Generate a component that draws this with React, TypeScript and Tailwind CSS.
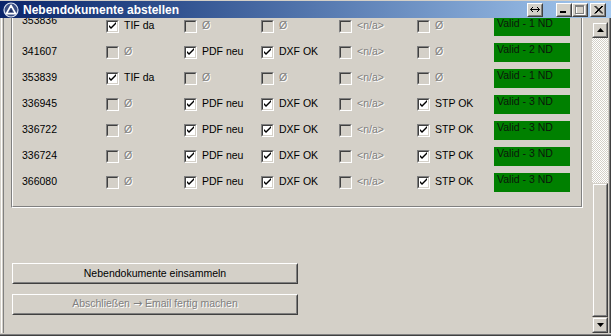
import React from "react"

type Cell = { label: string; on: boolean }

const TIF: Cell = { label: "TIF da", on: true }
const PDF: Cell = { label: "PDF neu", on: true }
const DXF: Cell = { label: "DXF OK", on: true }
const STP: Cell = { label: "STP OK", on: true }
const NA: Cell = { label: "<n/a>", on: false }
const NONE: Cell = { label: "Ø", on: false }

const rows: { id: string; cells: Cell[]; nd: number }[] = [
  { id: "353836", cells: [TIF, NONE, NONE, NA, NONE], nd: 1 },
  { id: "341607", cells: [NONE, PDF, DXF, NA, NONE], nd: 2 },
  { id: "353839", cells: [TIF, NONE, NONE, NA, NONE], nd: 1 },
  { id: "336945", cells: [NONE, PDF, DXF, NA, STP], nd: 3 },
  { id: "336722", cells: [NONE, PDF, DXF, NA, STP], nd: 3 },
  { id: "336724", cells: [NONE, PDF, DXF, NA, STP], nd: 3 },
  { id: "366080", cells: [NONE, PDF, DXF, NA, STP], nd: 3 },
]

export default function App() {
  return (
    <div className="w-[611px] h-[336px] bg-[#d4d0c8] flex flex-col overflow-hidden font-['Liberation_Sans',Arial,sans-serif] text-[10.5px] text-black border-t border-t-[#d4d0c8]">
      <TitleBar />

      <div className="flex flex-1 min-h-0">
        {/* left frame */}
        <div className="w-[3px] pl-[1px]">
          <div className="w-[1px] h-full bg-white" />
        </div>

        {/* scrolled client area */}
        <div className="flex-1 overflow-hidden border-l border-l-[#808080]">
          <div className="-mt-[5px] ml-[7px] w-[572px] border-x border-b border-l-[#808080] border-r-white border-b-white">
            <div className="border-x border-b border-l-white border-r-[#808080] border-b-[#808080] pl-[9px] pb-[11px]">
              {rows.map((r, n) => (
                <div key={r.id} className="grid grid-cols-[84px_78px_77px_78px_78px_77px_76px] h-[26px] items-center">
                  <span className={n === 0 ? "mb-[10px]" : ""}>{r.id}</span>
                  {r.cells.map((c, i) => (
                    <CheckCell key={i} cell={c} />
                  ))}
                  <div className="h-[19px] bg-[#008000] pl-[3px] leading-[13px] text-[#0b160b]">
                    Valid - {r.nd} ND
                  </div>
                </div>
              ))}
            </div>
          </div>

          <div className="mt-[55px] ml-[8px] w-[286px] flex flex-col gap-[10px]">
            <PushButton>Nebendokumente einsammeln</PushButton>
            <PushButton disabled>
              Abschließen <span className="font-['DejaVu_Sans',sans-serif] text-[11px]">→</span> Email fertig machen
            </PushButton>
          </div>
        </div>

        <ScrollBar />

        {/* right frame */}
        <div className="w-[3px] flex">
          <div className="w-[1px] bg-[#d4d0c8]" />
          <div className="w-[1px] bg-[#808080]" />
          <div className="w-[1px] bg-[#404040]" />
        </div>
      </div>

      {/* bottom frame */}
      <div className="h-[3px] flex flex-col">
        <div className="h-[1px] bg-[#d4d0c8]" />
        <div className="h-[1px] bg-[#808080]" />
        <div className="h-[1px] bg-[#404040]" />
      </div>
    </div>
  )
}

function TitleBar() {
  return (
    <div className="h-[17px] flex items-center bg-linear-to-r from-[#0a246a] to-[#a6caf0] pl-[3px] pr-[5px]">
      <svg width="16" height="16" viewBox="0 0 16 16" className="shrink-0">
        <circle cx="8" cy="8" r="7" fill="#3b4f84" stroke="#dde4f2" strokeWidth="1.2" />
        <path d="M8 3.3 L12.6 11.6 L3.4 11.6 Z" fill="none" stroke="#ffffff" strokeWidth="1.7" strokeLinejoin="round" />
        <path d="M8 7.2 L9.6 10 L6.4 10 Z" fill="#1a2a5a" />
      </svg>
      <span className="ml-[4px] text-white font-bold text-[12px] leading-none">Nebendokumente abstellen</span>

      <div className="ml-auto flex items-center">
        <TitleBtn>
          <svg width="10" height="7" viewBox="0 0 10 7">
            <path d="M0.5 3.5 H9.5" stroke="#000" strokeWidth="1" />
            <path d="M3 1 L0.5 3.5 L3 6 M7 1 L9.5 3.5 L7 6" stroke="#000" strokeWidth="1" fill="none" />
          </svg>
        </TitleBtn>
        <div className="w-[13px]" />
        <TitleBtn>
          <svg width="8" height="9" viewBox="0 0 8 9">
            <rect x="0" y="6" width="6" height="2" fill="#000" />
          </svg>
        </TitleBtn>
        <TitleBtn>
          <svg width="10" height="10" viewBox="0 0 10 10">
            <rect x="1.5" y="1.5" width="8" height="8" fill="none" stroke="#ffffff" strokeWidth="1" />
            <rect x="0.5" y="0.5" width="8" height="8" fill="none" stroke="#808080" strokeWidth="1" />
            <rect x="0.5" y="0.5" width="8" height="1.5" fill="#808080" />
          </svg>
        </TitleBtn>
        <div className="w-[2px]" />
        <TitleBtn>
          <svg width="9" height="8" viewBox="0 0 9 8">
            <path d="M0.5 0 L8 7.5 M1.5 0 L9 7.5 M8 0 L0.5 7.5 M9 0 L1.5 7.5" stroke="#000" strokeWidth="1" />
          </svg>
        </TitleBtn>
      </div>
    </div>
  )
}

function TitleBtn({ children }: { children: React.ReactNode }) {
  return (
    <div className="w-[16px] h-[14px] border border-t-white border-l-white border-b-[#404040] border-r-[#404040]">
      <div className="w-full h-full bg-[#d4d0c8] border border-t-[#d4d0c8] border-l-[#d4d0c8] border-b-[#808080] border-r-[#808080] flex items-center justify-center">
        {children}
      </div>
    </div>
  )
}

function CheckCell({ cell }: { cell: Cell }) {
  return (
    <div className="flex items-center gap-[5px]">
      <CheckBox checked={cell.on} disabled={!cell.on} />
      {cell.on ? (
        <span>{cell.label}</span>
      ) : (
        <span className="text-[#808080] [text-shadow:1px_1px_0_#ffffff]">{cell.label}</span>
      )}
    </div>
  )
}

function CheckBox({ checked, disabled }: { checked: boolean; disabled: boolean }) {
  return (
    <span className="block w-[13px] h-[13px] shrink-0 border border-t-[#808080] border-l-[#808080] border-b-white border-r-white">
      <span
        className={`block w-full h-full border border-t-[#404040] border-l-[#404040] border-b-[#d4d0c8] border-r-[#d4d0c8] ${
          disabled ? "bg-[#d4d0c8]" : "bg-white"
        }`}
      >
        {checked && (
          <svg width="9" height="9" viewBox="0 0 9 9" className="block">
            <path d="M1 3 L1 5 L3 7 L8 2 L8 0 L3 5 Z" fill="#000" />
          </svg>
        )}
      </span>
    </span>
  )
}

function PushButton({ children, disabled }: { children: React.ReactNode; disabled?: boolean }) {
  return (
    <div className="h-[21px] border border-t-white border-l-white border-b-[#404040] border-r-[#404040]">
      <div className="h-full border border-t-[#d4d0c8] border-l-[#d4d0c8] border-b-[#808080] border-r-[#808080] flex items-center justify-center">
        {disabled ? (
          <span className="text-[#808080] [text-shadow:1px_1px_0_#ffffff]">{children}</span>
        ) : (
          <span>{children}</span>
        )}
      </div>
    </div>
  )
}

function Raised({ className, children }: { className?: string; children?: React.ReactNode }) {
  return (
    <div className={`border border-t-[#d4d0c8] border-l-[#d4d0c8] border-b-[#404040] border-r-[#404040] ${className ?? ""}`}>
      <div className="h-full border border-t-white border-l-white border-b-[#808080] border-r-[#808080] bg-[#d4d0c8] flex items-center justify-center">
        {children}
      </div>
    </div>
  )
}

function ScrollBar() {
  return (
    <div className="w-[16px] flex flex-col pt-[4px]">
      <Raised className="h-[16px]">
        <svg width="7" height="4" viewBox="0 0 7 4">
          <path d="M3.5 0 L7 4 L0 4 Z" fill="#000" />
        </svg>
      </Raised>
      <div className="flex-1 bg-[image:repeating-conic-gradient(#ffffff_0_25%,#d4d0c8_0_50%)] bg-[length:2px_2px]" />
      <Raised className="h-[134px]" />
      <Raised className="h-[16px]">
        <svg width="7" height="4" viewBox="0 0 7 4">
          <path d="M0 0 L7 0 L3.5 4 Z" fill="#000" />
        </svg>
      </Raised>
    </div>
  )
}
